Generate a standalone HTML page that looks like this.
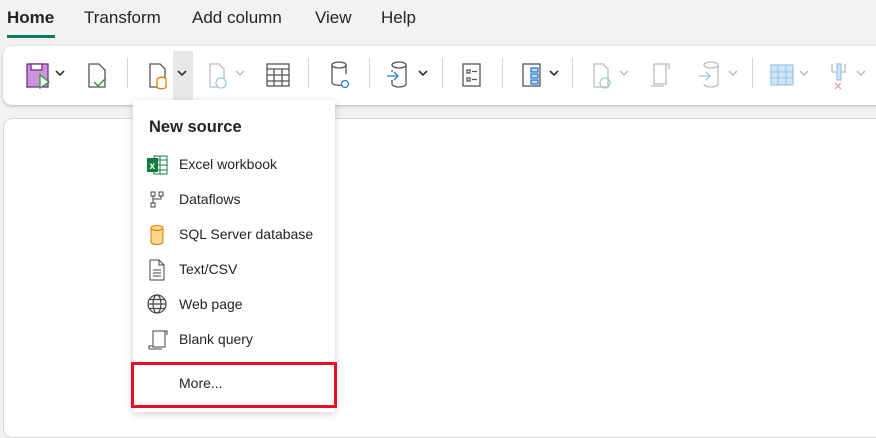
<!DOCTYPE html>
<html><head><meta charset="utf-8"><style>
*{margin:0;padding:0;box-sizing:border-box}
body{width:876px;height:418px;background:#f3f2f1;font-family:"Segoe UI","Liberation Sans",sans-serif;position:relative;overflow:hidden;color:#242424}
.tab{position:absolute;top:8px;font-size:17px;color:#242424}
.ribbon{position:absolute;left:3px;top:46px;width:890px;height:59px;background:#fff;border-radius:9px;box-shadow:0 1px 3px rgba(0,0,0,.25)}
.panel{position:absolute;left:3px;top:118px;width:890px;height:320px;background:#fff;border:1px solid #d6d6d6;border-radius:9px}
.sep{position:absolute;top:58px;width:1px;height:30px;background:#d6d6d6}
.menu{position:absolute;left:133px;top:100px;width:202px;height:312px;background:#fff;box-shadow:0 2px 8px rgba(0,0,0,.18)}
.mh{position:absolute;left:16px;top:18px;font-size:16.5px;font-weight:bold;color:#242424}
.mi{position:absolute;left:46px;font-size:14px;color:#242424}
.mico{position:absolute;left:14px}
.red{position:absolute;left:131px;top:362px;width:206px;height:46px;border:3px solid #e81123}
</style></head><body>
<div class="tab" style="left:7px;font-weight:600">Home</div>
<div style="position:absolute;left:7px;top:35px;width:48px;height:3px;background:#117865"></div>
<div class="tab" style="left:84px">Transform</div>
<div class="tab" style="left:192px">Add column</div>
<div class="tab" style="left:315px">View</div>
<div class="tab" style="left:381px">Help</div>
<div class="ribbon"></div>
<div class="panel"></div>
<div style="position:absolute;left:173px;top:51px;width:20px;height:50px;background:#e8e8e8"></div>
<svg style="position:absolute;left:0;top:46px" width="876" height="60" fill="none" stroke-width="1.3">
<rect x="27" y="18" width="21" height="23" fill="#c896d8" stroke="#7a2a8c"/>
<rect x="31" y="18" width="11" height="6" fill="#fff" stroke="#7a2a8c"/>
<path d="M40 29 L49 36 L40 42 Z" fill="#fff" stroke="#2a9d3a"/>
<path d="M56 25 l4 4 4-4" stroke="#333" stroke-width="1.6"/>
<path d="M89 18 h10 l6 6 v17 h-16 z" stroke="#555"/><path d="M94 36 l4 4 8-8" stroke="#2a9d3a" stroke-width="1.5"/>
<path d="M150 18 h10 l5 5 v18 h-15 z" stroke="#555"/>
<path d="M157 33 v8 a4 1.5 0 0 0 9 0 v-8 a4 1.5 0 0 0 -9 0" stroke="#e07b00" fill="#fff"/>
<path d="M178 25 l4 4 4-4" stroke="#333" stroke-width="1.6"/>
<path d="M210 18 h9 l5 5 v18 h-14 z" stroke="#bbb"/><circle cx="221" cy="37" r="5" stroke="#9cc8ea" fill="#fff"/>
<path d="M236 25 l4 4 4-4" stroke="#bbb" stroke-width="1.5"/>
<rect x="267" y="18" width="22" height="22" stroke="#555"/><path d="M267 23h22M267 29h22M267 35h22M274 23v17M282 23v17" stroke="#555"/>
<path d="M332 19 v18 a7 3 0 0 0 10 2 M332 19 a7 3 0 0 1 14 0 v9 M332 19 a7 3 0 0 0 14 0" stroke="#555"/>
<circle cx="345" cy="38" r="3.5" stroke="#2b7bd6"/>
<path d="M392 19 a7 3 0 0 1 14 0 v19 a7 3 0 0 1 -14 0 v-4 M392 19 a7 3 0 0 0 14 0 M392 24 v2" stroke="#555"/>
<path d="M387 30 h11 M394 26 l4 4 -4 4" stroke="#2b7bd6"/>
<path d="M419 25 l4 4 4-4" stroke="#333" stroke-width="1.6"/>
<rect x="463" y="18" width="17" height="22" stroke="#555"/><rect x="467" y="24" width="3" height="3" stroke="#555"/><rect x="467" y="32" width="3" height="3" stroke="#555"/><path d="M472 25.5h5M472 33.5h5" stroke="#555"/>
<rect x="523" y="18" width="17" height="22" stroke="#555"/><rect x="531" y="22" width="7" height="4" fill="#bcdcf4" stroke="#2b7bd6"/><rect x="531" y="28" width="7" height="4" fill="#bcdcf4" stroke="#2b7bd6"/><rect x="531" y="34" width="7" height="4" fill="#bcdcf4" stroke="#2b7bd6"/>
<path d="M550 25 l4 4 4-4" stroke="#333" stroke-width="1.6"/>
<path d="M594 18 h9 l5 5 v18 h-14 z" stroke="#bbb"/><circle cx="605" cy="37" r="5" stroke="#9ed3a8"/>
<path d="M620 25 l4 4 4-4" stroke="#bbb" stroke-width="1.5"/>
<path d="M654 18 h12 v20 h-12 v-20 M651 40 h13 M666 18 h3 v5" stroke="#bbb"/>
<path d="M704 19 a7 3 0 0 1 14 0 v19 a7 3 0 0 1 -14 0 M704 19 a7 3 0 0 0 14 0" stroke="#bbb"/><path d="M699 30 h11 M706 26 l4 4 -4 4" stroke="#9cc8ea"/>
<path d="M729 25 l4 4 4-4" stroke="#bbb" stroke-width="1.5"/>
<rect x="771" y="19" width="22" height="20" fill="#cfe6f8" stroke="#9cc8ea"/><path d="M771 26h22M771 32h22M778 19v20M786 19v20" stroke="#9cc8ea"/>
<path d="M800 25 l4 4 4-4" stroke="#bbb" stroke-width="1.5"/>
<path d="M832 18 v8 h13 v-8" stroke="#bbb"/><rect x="837" y="18" width="4" height="16" fill="#cfe6f8" stroke="#9cc8ea"/><path d="M835 37 l6 6 M841 37 l-6 6" stroke="#f2a0a0"/>
<path d="M857 25 l4 4 4-4" stroke="#bbb" stroke-width="1.5"/>
</svg>
<div class="sep" style="left:127px"></div><div class="sep" style="left:308px"></div><div class="sep" style="left:369px"></div><div class="sep" style="left:442px"></div><div class="sep" style="left:502px"></div><div class="sep" style="left:572px"></div><div class="sep" style="left:752px"></div>
<div class="menu">
<div class="mh">New source</div>
<svg class="mico" style="top:55px" width="22" height="20"><rect x="7" y="1" width="13" height="18" fill="#fff" stroke="#107c41"/><path d="M7 5h13M7 10h13M7 15h13M13 1v18" stroke="#107c41"/><rect x="0" y="3" width="11" height="14" fill="#107c41"/><text x="2.5" y="14" font-size="10" font-weight="bold" fill="#fff" font-family="Liberation Sans">x</text></svg>
<div class="mi" style="top:56px">Excel workbook</div>
<svg class="mico" style="top:90px" width="20" height="20" fill="none" stroke="#444"><rect x="4" y="2" width="4" height="4"/><rect x="12" y="2" width="4" height="4"/><rect x="4" y="13" width="4" height="4"/><path d="M6 6v7M14 6v3h-8"/></svg>
<div class="mi" style="top:91px">Dataflows</div>
<svg class="mico" style="top:124px" width="20" height="22"><path d="M4 4v14a6 2.5 0 0 0 12 0V4a6 2.5 0 0 0-12 0a6 2.5 0 0 0 12 0" fill="#fcd88a" stroke="#e07b00"/></svg>
<div class="mi" style="top:126px">SQL Server database</div>
<svg class="mico" style="top:159px" width="20" height="22" fill="none" stroke="#444"><path d="M3 1h9l5 5v15H3z M12 1v5h5 M6 11h8M6 14h8M6 17h8"/></svg>
<div class="mi" style="top:161px">Text/CSV</div>
<svg class="mico" style="top:194px" width="22" height="22" fill="none" stroke="#444" stroke-width="1.2"><circle cx="10" cy="10" r="9"/><ellipse cx="10" cy="10" rx="4" ry="9"/><path d="M1 10h18M2.5 5.5h15M2.5 14.5h15"/></svg>
<div class="mi" style="top:196px">Web page</div>
<svg class="mico" style="top:229px" width="22" height="22" fill="none" stroke="#444"><path d="M6 2h12v16H6z M2 20h13 M2 20v-3h4 M18 2h2v4"/></svg>
<div class="mi" style="top:231px">Blank query</div>
<div class="mi" style="top:275px">More...</div>
</div>
<div class="red"></div>
</body></html>
